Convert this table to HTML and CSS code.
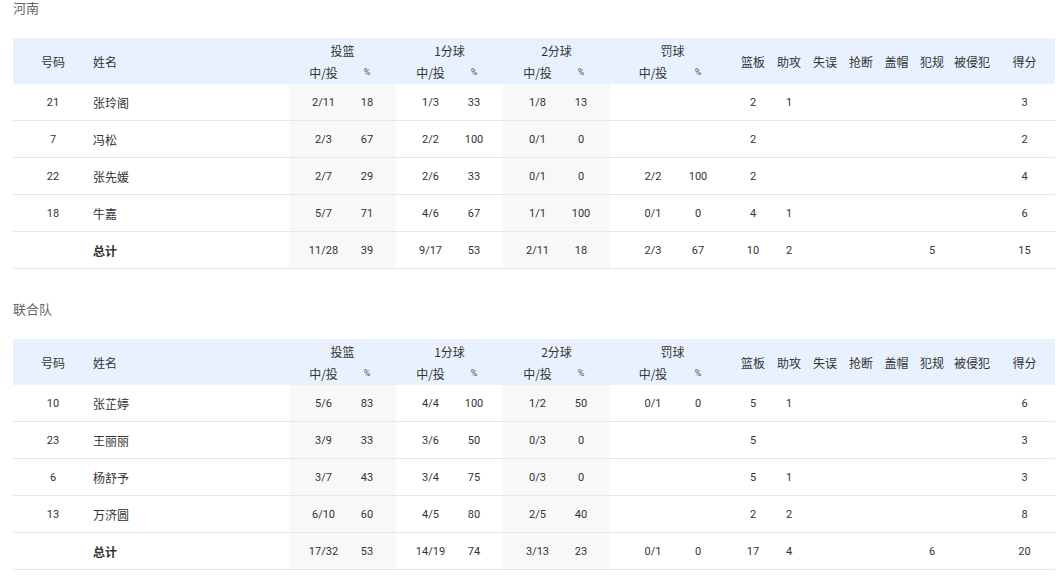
FILE: index.html
```html
<!DOCTYPE html>
<html lang="zh">
<head>
<meta charset="utf-8">
<title>技术统计</title>
<link rel="stylesheet" href="styles.css">
</head>
<body>
<div class="page">
  <section class="team">
    <h2 class="team-title">河南</h2>
    <div class="stats">
      <div class="head">
        <div class="h c-no span2">号码</div>
        <div class="h c-name span2">姓名</div>
        <div class="h grp g-a">投篮</div>
        <div class="h grp g-b">1分球</div>
        <div class="h grp g-c">2分球</div>
        <div class="h grp g-d">罚球</div>
        <div class="h span2 c-reb">篮板</div>
        <div class="h span2 c-ast">助攻</div>
        <div class="h span2 c-to">失误</div>
        <div class="h span2 c-stl">抢断</div>
        <div class="h span2 c-blk">盖帽</div>
        <div class="h span2 c-pf">犯规</div>
        <div class="h span2 c-fd">被侵犯</div>
        <div class="h span2 c-pts">得分</div>
        <div class="h sub c-a1">中/投</div>
        <div class="h sub pct c-a2 pr">%</div>
        <div class="h sub c-b1">中/投</div>
        <div class="h sub pct c-b2 pr">%</div>
        <div class="h sub c-c1">中/投</div>
        <div class="h sub pct c-c2 pr">%</div>
        <div class="h sub c-d1 pl">中/投</div>
        <div class="h sub pct c-d2 pr2">%</div>
      </div>
      <div class="row">
        <div class="d">21</div><div class="d name">张玲阁</div>
        <div class="d shade">2/11</div><div class="d shade pr">18</div>
        <div class="d">1/3</div><div class="d pr">33</div>
        <div class="d shade">1/8</div><div class="d shade pr">13</div>
        <div class="d pl"></div><div class="d pr2"></div>
        <div class="d">2</div><div class="d">1</div><div class="d"></div><div class="d"></div><div class="d"></div><div class="d"></div><div class="d"></div><div class="d">3</div>
      </div>
      <div class="row">
        <div class="d">7</div><div class="d name">冯松</div>
        <div class="d shade">2/3</div><div class="d shade pr">67</div>
        <div class="d">2/2</div><div class="d pr">100</div>
        <div class="d shade">0/1</div><div class="d shade pr">0</div>
        <div class="d pl"></div><div class="d pr2"></div>
        <div class="d">2</div><div class="d"></div><div class="d"></div><div class="d"></div><div class="d"></div><div class="d"></div><div class="d"></div><div class="d">2</div>
      </div>
      <div class="row">
        <div class="d">22</div><div class="d name">张先媛</div>
        <div class="d shade">2/7</div><div class="d shade pr">29</div>
        <div class="d">2/6</div><div class="d pr">33</div>
        <div class="d shade">0/1</div><div class="d shade pr">0</div>
        <div class="d pl">2/2</div><div class="d pr2">100</div>
        <div class="d">2</div><div class="d"></div><div class="d"></div><div class="d"></div><div class="d"></div><div class="d"></div><div class="d"></div><div class="d">4</div>
      </div>
      <div class="row">
        <div class="d">18</div><div class="d name">牛嘉</div>
        <div class="d shade">5/7</div><div class="d shade pr">71</div>
        <div class="d">4/6</div><div class="d pr">67</div>
        <div class="d shade">1/1</div><div class="d shade pr">100</div>
        <div class="d pl">0/1</div><div class="d pr2">0</div>
        <div class="d">4</div><div class="d">1</div><div class="d"></div><div class="d"></div><div class="d"></div><div class="d"></div><div class="d"></div><div class="d">6</div>
      </div>
      <div class="row total">
        <div class="d"></div><div class="d name strong">总计</div>
        <div class="d shade">11/28</div><div class="d shade pr">39</div>
        <div class="d">9/17</div><div class="d pr">53</div>
        <div class="d shade">2/11</div><div class="d shade pr">18</div>
        <div class="d pl">2/3</div><div class="d pr2">67</div>
        <div class="d">10</div><div class="d">2</div><div class="d"></div><div class="d"></div><div class="d"></div><div class="d">5</div><div class="d"></div><div class="d">15</div>
      </div>
    </div>
  </section>

  <section class="team">
    <h2 class="team-title">联合队</h2>
    <div class="stats">
      <div class="head">
        <div class="h c-no span2">号码</div>
        <div class="h c-name span2">姓名</div>
        <div class="h grp g-a">投篮</div>
        <div class="h grp g-b">1分球</div>
        <div class="h grp g-c">2分球</div>
        <div class="h grp g-d">罚球</div>
        <div class="h span2 c-reb">篮板</div>
        <div class="h span2 c-ast">助攻</div>
        <div class="h span2 c-to">失误</div>
        <div class="h span2 c-stl">抢断</div>
        <div class="h span2 c-blk">盖帽</div>
        <div class="h span2 c-pf">犯规</div>
        <div class="h span2 c-fd">被侵犯</div>
        <div class="h span2 c-pts">得分</div>
        <div class="h sub c-a1">中/投</div>
        <div class="h sub pct c-a2 pr">%</div>
        <div class="h sub c-b1">中/投</div>
        <div class="h sub pct c-b2 pr">%</div>
        <div class="h sub c-c1">中/投</div>
        <div class="h sub pct c-c2 pr">%</div>
        <div class="h sub c-d1 pl">中/投</div>
        <div class="h sub pct c-d2 pr2">%</div>
      </div>
      <div class="row">
        <div class="d">10</div><div class="d name">张芷婷</div>
        <div class="d shade">5/6</div><div class="d shade pr">83</div>
        <div class="d">4/4</div><div class="d pr">100</div>
        <div class="d shade">1/2</div><div class="d shade pr">50</div>
        <div class="d pl">0/1</div><div class="d pr2">0</div>
        <div class="d">5</div><div class="d">1</div><div class="d"></div><div class="d"></div><div class="d"></div><div class="d"></div><div class="d"></div><div class="d">6</div>
      </div>
      <div class="row">
        <div class="d">23</div><div class="d name">王丽丽</div>
        <div class="d shade">3/9</div><div class="d shade pr">33</div>
        <div class="d">3/6</div><div class="d pr">50</div>
        <div class="d shade">0/3</div><div class="d shade pr">0</div>
        <div class="d pl"></div><div class="d pr2"></div>
        <div class="d">5</div><div class="d"></div><div class="d"></div><div class="d"></div><div class="d"></div><div class="d"></div><div class="d"></div><div class="d">3</div>
      </div>
      <div class="row">
        <div class="d">6</div><div class="d name">杨舒予</div>
        <div class="d shade">3/7</div><div class="d shade pr">43</div>
        <div class="d">3/4</div><div class="d pr">75</div>
        <div class="d shade">0/3</div><div class="d shade pr">0</div>
        <div class="d pl"></div><div class="d pr2"></div>
        <div class="d">5</div><div class="d">1</div><div class="d"></div><div class="d"></div><div class="d"></div><div class="d"></div><div class="d"></div><div class="d">3</div>
      </div>
      <div class="row">
        <div class="d">13</div><div class="d name">万济圆</div>
        <div class="d shade">6/10</div><div class="d shade pr">60</div>
        <div class="d">4/5</div><div class="d pr">80</div>
        <div class="d shade">2/5</div><div class="d shade pr">40</div>
        <div class="d pl"></div><div class="d pr2"></div>
        <div class="d">2</div><div class="d">2</div><div class="d"></div><div class="d"></div><div class="d"></div><div class="d"></div><div class="d"></div><div class="d">8</div>
      </div>
      <div class="row total">
        <div class="d"></div><div class="d name strong">总计</div>
        <div class="d shade">17/32</div><div class="d shade pr">53</div>
        <div class="d">14/19</div><div class="d pr">74</div>
        <div class="d shade">3/13</div><div class="d shade pr">23</div>
        <div class="d pl">0/1</div><div class="d pr2">0</div>
        <div class="d">17</div><div class="d">4</div><div class="d"></div><div class="d"></div><div class="d"></div><div class="d">6</div><div class="d"></div><div class="d">20</div>
      </div>
    </div>
  </section>
</div>
</body>
</html>
```

FILE: styles.css
```css
html, body {
  margin: 0;
  padding: 0;
  background: #ffffff;
}

body {
  font-family: Roboto, "Noto Sans CJK SC", sans-serif;
  color: #333333;
}

.page {
  width: 1042px;
  margin-left: 13px;
}

.team {
  margin-bottom: 32px;
}

.team-title {
  margin: 0 0 20px 0;
  height: 18px;
  line-height: 16px;
  font-size: 13px;
  font-weight: normal;
  color: #666666;
  font-family: "Noto Sans CJK SC", sans-serif;
}

.stats {
  width: 1042px;
}

.head,
.row {
  display: grid;
  grid-template-columns: 80px 196px 69px 38px 69px 38px 69px 38px 66px 59px 36px 36px 36px 36px 35px 36px 44px 61px;
}

.head {
  grid-template-rows: 23px 23px;
  background: #e8f1fd;
}

.h {
  display: flex;
  align-items: center;
  justify-content: center;
  font-family: "Noto Sans CJK SC", sans-serif;
  font-size: 12px;
  color: #333333;
  white-space: nowrap;
}

.span2 { grid-row: 1 / span 2; }
.c-no { grid-column: 1; }
.c-name { grid-column: 2; justify-content: flex-start; }
.g-a { grid-column: 3 / span 2; grid-row: 1; padding-top: 1px; }
.g-b { grid-column: 5 / span 2; grid-row: 1; padding-top: 1px; }
.g-c { grid-column: 7 / span 2; grid-row: 1; padding-top: 1px; }
.g-d { grid-column: 9 / span 2; grid-row: 1; padding-top: 1px; }
.c-reb { grid-column: 11; }
.c-ast { grid-column: 12; }
.c-to { grid-column: 13; }
.c-stl { grid-column: 14; }
.c-blk { grid-column: 15; }
.c-pf { grid-column: 16; }
.c-fd { grid-column: 17; }
.c-pts { grid-column: 18; }
.sub { grid-row: 2; padding-bottom: 1px; }
.c-a1 { grid-column: 3; }
.c-a2 { grid-column: 4; }
.c-b1 { grid-column: 5; }
.c-b2 { grid-column: 6; }
.c-c1 { grid-column: 7; }
.c-c2 { grid-column: 8; }
.c-d1 { grid-column: 9; }
.c-d2 { grid-column: 10; }

.pct {
  font-family: Roboto, sans-serif;
  font-size: 9px;
  color: #555555;
}

.row {
  height: 36px;
  border-bottom: 1px solid #e6e6e6;
}

.d {
  display: flex;
  align-items: center;
  justify-content: center;
  font-size: 11px;
  color: #333333;
  white-space: nowrap;
}

.name {
  justify-content: flex-start;
  font-family: "Noto Sans CJK SC", sans-serif;
  font-size: 12px;
}

.strong {
  font-weight: bold;
}

.shade {
  background: #f8f8f8;
}

.pr { padding-right: 20px; }
.pl { padding-left: 20px; }
.pr2 { padding-right: 15px; }
```
